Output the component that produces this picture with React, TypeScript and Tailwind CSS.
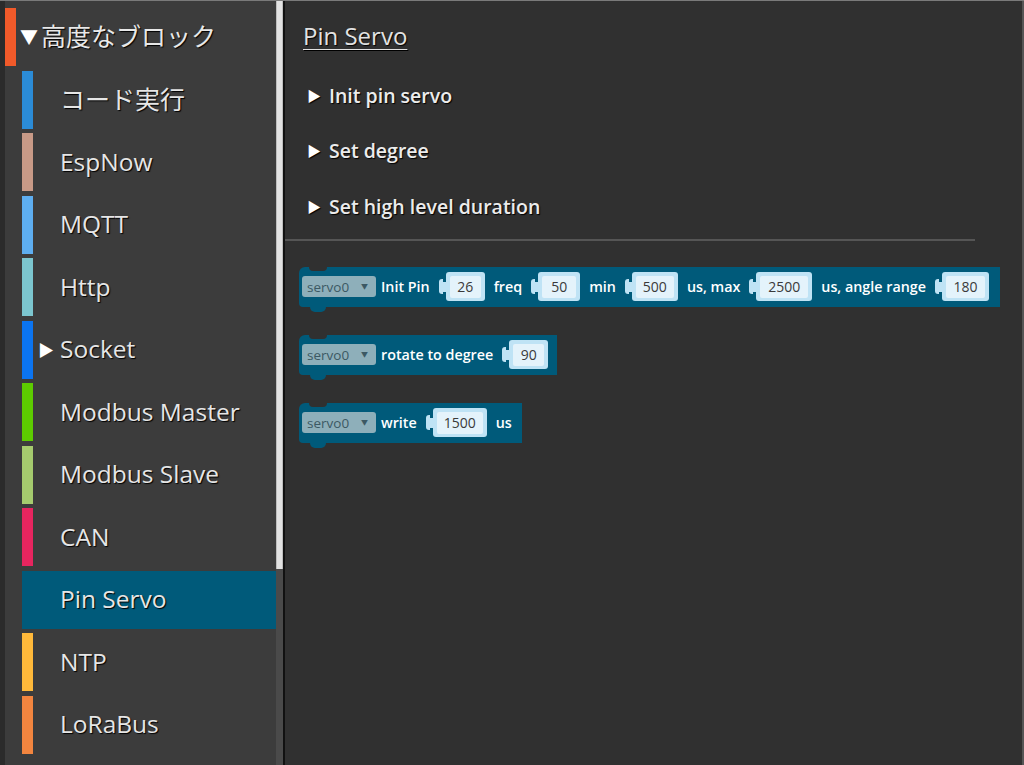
import React from "react";

type Cat = { name: string; color: string; arrow?: boolean; selected?: boolean; cjk?: boolean };

const cats: Cat[] = [
  { name: "コード実行", color: "bg-[#2b8bd6]", cjk: true },
  { name: "EspNow", color: "bg-[#c89a87]" },
  { name: "MQTT", color: "bg-[#5eaef0]" },
  { name: "Http", color: "bg-[#7cc6cf]" },
  { name: "Socket", color: "bg-[#0b74f0]", arrow: true },
  { name: "Modbus Master", color: "bg-[#5dcc00]" },
  { name: "Modbus Slave", color: "bg-[#a5cb6e]" },
  { name: "CAN", color: "bg-[#e7255f]" },
  { name: "Pin Servo", color: "bg-[#005a7a]", selected: true },
  { name: "NTP", color: "bg-[#ffb93a]" },
  { name: "LoRaBus", color: "bg-[#f2853f]" },
];

const shadow = "[text-shadow:1px_1px_1px_#000]";

function Dropdown() {
  return (
    <div className="-mr-[4px] flex h-[21px] w-[74px] items-center justify-between rounded-[3px] bg-[#8eafba] pl-[5px] pr-[8px] text-[13.5px] text-[#3c5964]">
      <span>servo0</span>
      <span className="text-[7px]">▼</span>
    </div>
  );
}

function Input({ value, width }: { value: string; width: number }) {
  return (
    <div className="flex items-center">
      <div className="h-[15px] w-[4px] rounded-l-[3px] bg-[#bfe3f5]" />
      <div className="h-[10px] w-[3px] bg-[#bfe3f5]" />
      <div className="flex h-[29px] items-center rounded-[3px] bg-[#bfe3f5] px-[4px]">
        <div
          className="flex h-[22px] items-center justify-center rounded-[2px] bg-[#e4f3fb] text-[14px] text-[#3a3a3a]"
          style={{ width }}
        >
          {value}
        </div>
      </div>
    </div>
  );
}

function Label({ children }: { children: React.ReactNode }) {
  return <span className="whitespace-nowrap text-[14.3px] font-semibold text-white">{children}</span>;
}

function Block({ children, width }: { children: React.ReactNode; width: number }) {
  return (
    <div className="relative h-[40px] rounded-tl-[6px] rounded-bl-[4px] bg-[#005a7a]" style={{ width }}>
      <div className="absolute left-[10px] top-0 h-[4px] w-[18px] rounded-b-[6px] bg-[#303030]" />
      <div className="absolute left-[11px] top-[40px] h-[5px] w-[16px] rounded-b-[6px] bg-[#005a7a]" />
      <div className="flex h-full items-center gap-[9px] pl-[3px]">{children}</div>
    </div>
  );
}

export default function App() {
  return (
    <div
      className="flex h-[765px] w-[1024px] overflow-hidden border-t border-[#7a7a7a] bg-[#2b2b2b]"
      style={{ fontFamily: '"Open Sans", "Noto Sans CJK JP", sans-serif' }}
    >
      {/* sidebar */}
      <div className="ml-[5px] flex h-full w-[271px] flex-col bg-[#3c3c3c] pt-[3px]">
        <div className="flex h-[62.5px]">
          <div className="mt-[4px] flex h-[58px] w-full items-center">
            <div className="h-full w-[11px] bg-[#f15a2a]" />
            <span className="ml-[4px] text-[18px] text-white">▼</span>
            <span className={`ml-[3px] text-[25px] text-[#e8e8e8] ${shadow}`}>高度なブロック</span>
          </div>
        </div>
        {cats.map((c) => (
          <div key={c.name} className="flex h-[62.5px] pl-[17px]">
            <div className={`mt-[4px] flex h-[58px] w-full items-center ${c.selected ? "bg-[#005a7a]" : ""}`}>
              <div className={`h-full w-[11px] ${c.color}`} />
              <span className="w-[27px] pl-[5px] text-[16px] text-white">{c.arrow ? "▶" : ""}</span>
              <span
                className={`${c.cjk ? "text-[25px] font-normal" : "text-[24.5px] font-medium"} text-[#e6e6e6] ${shadow}`}
              >
                {c.name}
              </span>
            </div>
          </div>
        ))}
      </div>

      {/* scrollbar */}
      <div className="flex h-full w-[7px] flex-col bg-[#4a4a4a]">
        <div className="h-[568px] w-full border-x border-[#bdbdbd] bg-[#e2e2e2]" />
      </div>
      <div className="h-full w-[2px] bg-[#111]" />

      {/* workspace */}
      <div className="flex h-full flex-1 flex-col border-r-2 border-[#555] bg-[#303030]">
        <div className="pl-[18px] pt-[17px]">
          <span className={`text-[24px] text-[#e2e2e2] underline decoration-1 underline-offset-[4px] ${shadow}`}>Pin Servo</span>
        </div>
        <div className="mt-[27px] flex flex-col gap-[26px] pl-[22px]">
          {["Init pin servo", "Set degree", "Set high level duration"].map((t) => (
            <div key={t} className={`flex items-center text-[19.5px] font-semibold text-[#ececec] ${shadow}`}>
              <span className="mr-[8px] text-[14px] text-white">▶</span>
              {t}
            </div>
          ))}
        </div>
        <div className="mt-[18px] h-[2px] w-[690px] bg-[#555]" />

        <div className="mt-[26px] flex flex-col gap-[28px] pl-[14px]">
          <Block width={701}>
            <Dropdown />
            <Label>Init Pin</Label>
            <Input value="26" width={31} />
            <Label>freq</Label>
            <Input value="50" width={34} />
            <Label>min</Label>
            <Input value="500" width={38} />
            <Label>us, max</Label>
            <Input value="2500" width={48} />
            <Label>us, angle range</Label>
            <Input value="180" width={39} />
          </Block>
          <Block width={258}>
            <Dropdown />
            <Label>rotate to degree</Label>
            <Input value="90" width={31} />
          </Block>
          <Block width={223}>
            <Dropdown />
            <Label>write</Label>
            <Input value="1500" width={46} />
            <Label>us</Label>
          </Block>
        </div>
      </div>
    </div>
  );
}
